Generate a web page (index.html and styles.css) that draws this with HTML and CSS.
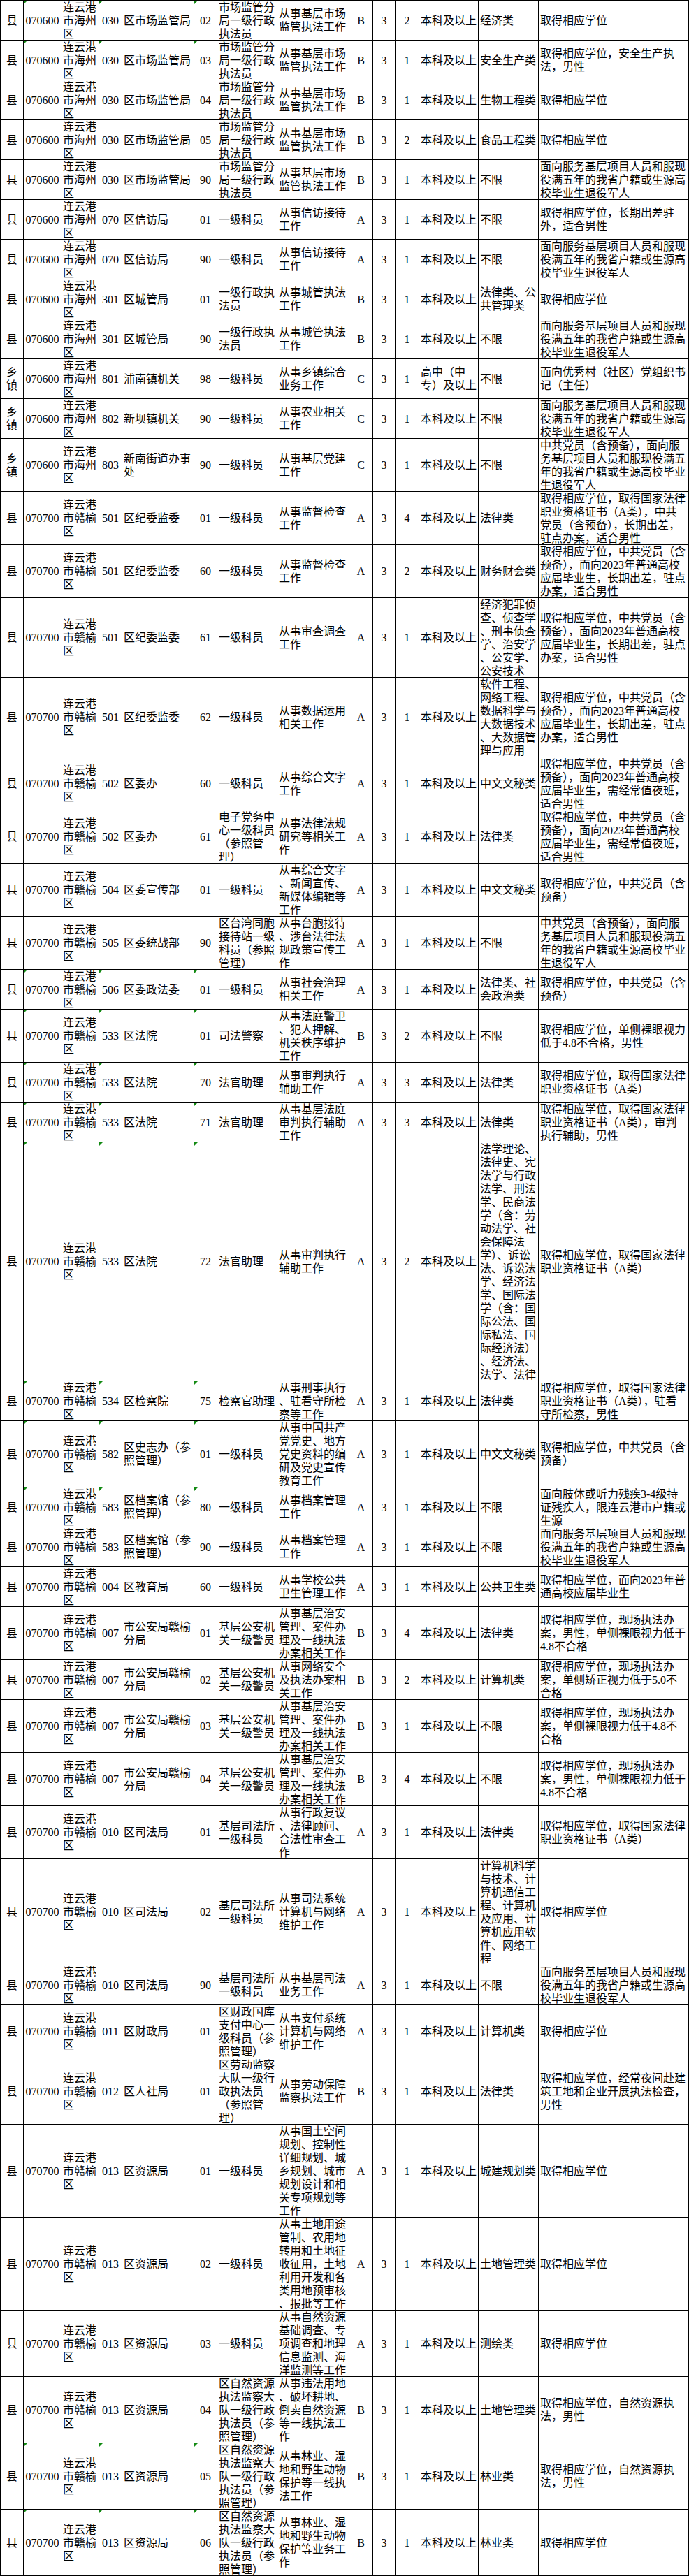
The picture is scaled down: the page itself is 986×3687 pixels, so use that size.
FILE: index.html
```html
<!DOCTYPE html>
<html lang="zh-CN">
<head>
<meta charset="utf-8">
<title>职位表</title>
<link rel="stylesheet" href="styles.css">
</head>
<body>
<div class="sheet">
<div class="row tri"><div>县</div><div>070600</div><div>连云港市海州区</div><div>030</div><div>区市场监管局</div><div>02</div><div>市场监管分局一级行政执法员</div><div>从事基层市场<br>监管执法工作</div><div>B</div><div>3</div><div>2</div><div>本科及以上</div><div>经济类</div><div>取得相应学位</div></div>
<div class="row tri"><div>县</div><div>070600</div><div>连云港市海州区</div><div>030</div><div>区市场监管局</div><div>03</div><div>市场监管分局一级行政执法员</div><div>从事基层市场<br>监管执法工作</div><div>B</div><div>3</div><div>1</div><div>本科及以上</div><div>安全生产类</div><div>取得相应学位，安全生产执<br>法，男性</div></div>
<div class="row"><div>县</div><div>070600</div><div>连云港市海州区</div><div>030</div><div>区市场监管局</div><div>04</div><div>市场监管分局一级行政执法员</div><div>从事基层市场<br>监管执法工作</div><div>B</div><div>3</div><div>1</div><div>本科及以上</div><div>生物工程类</div><div>取得相应学位</div></div>
<div class="row"><div>县</div><div>070600</div><div>连云港市海州区</div><div>030</div><div>区市场监管局</div><div>05</div><div>市场监管分局一级行政执法员</div><div>从事基层市场<br>监管执法工作</div><div>B</div><div>3</div><div>2</div><div>本科及以上</div><div>食品工程类</div><div>取得相应学位</div></div>
<div class="row"><div>县</div><div>070600</div><div>连云港市海州区</div><div>030</div><div>区市场监管局</div><div>90</div><div>市场监管分局一级行政执法员</div><div>从事基层市场<br>监管执法工作</div><div>B</div><div>3</div><div>1</div><div>本科及以上</div><div>不限</div><div>面向服务基层项目人员和服现<br>役满五年的我省户籍或生源高<br>校毕业生退役军人</div></div>
<div class="row"><div>县</div><div>070600</div><div>连云港市海州区</div><div>070</div><div>区信访局</div><div>01</div><div>一级科员</div><div>从事信访接待<br>工作</div><div>A</div><div>3</div><div>1</div><div>本科及以上</div><div>不限</div><div>取得相应学位，长期出差驻<br>外，适合男性</div></div>
<div class="row"><div>县</div><div>070600</div><div>连云港市海州区</div><div>070</div><div>区信访局</div><div>90</div><div>一级科员</div><div>从事信访接待<br>工作</div><div>A</div><div>3</div><div>1</div><div>本科及以上</div><div>不限</div><div>面向服务基层项目人员和服现<br>役满五年的我省户籍或生源高<br>校毕业生退役军人</div></div>
<div class="row"><div>县</div><div>070600</div><div>连云港市海州区</div><div>301</div><div>区城管局</div><div>01</div><div>一级行政执法员</div><div>从事城管执法<br>工作</div><div>B</div><div>3</div><div>1</div><div>本科及以上</div><div>法律类、公<br>共管理类</div><div>取得相应学位</div></div>
<div class="row"><div>县</div><div>070600</div><div>连云港市海州区</div><div>301</div><div>区城管局</div><div>90</div><div>一级行政执法员</div><div>从事城管执法<br>工作</div><div>B</div><div>3</div><div>1</div><div>本科及以上</div><div>不限</div><div>面向服务基层项目人员和服现<br>役满五年的我省户籍或生源高<br>校毕业生退役军人</div></div>
<div class="row"><div>乡<br>镇</div><div>070600</div><div>连云港市海州区</div><div>801</div><div>浦南镇机关</div><div>98</div><div>一级科员</div><div>从事乡镇综合<br>业务工作</div><div>C</div><div>3</div><div>1</div><div>高中（中<br>专）及以上</div><div>不限</div><div>面向优秀村（社区）党组织书<br>记（主任）</div></div>
<div class="row"><div>乡<br>镇</div><div>070600</div><div>连云港市海州区</div><div>802</div><div>新坝镇机关</div><div>90</div><div>一级科员</div><div>从事农业相关<br>工作</div><div>C</div><div>3</div><div>1</div><div>本科及以上</div><div>不限</div><div>面向服务基层项目人员和服现<br>役满五年的我省户籍或生源高<br>校毕业生退役军人</div></div>
<div class="row r4"><div>乡<br>镇</div><div>070600</div><div>连云港市海州区</div><div>803</div><div>新南街道办事处</div><div>90</div><div>一级科员</div><div>从事基层党建<br>工作</div><div>C</div><div>3</div><div>1</div><div>本科及以上</div><div>不限</div><div>中共党员（含预备），面向服<br>务基层项目人员和服现役满五<br>年的我省户籍或生源高校毕业<br>生退役军人</div></div>
<div class="row r4"><div>县</div><div>070700</div><div>连云港市赣榆区</div><div>501</div><div>区纪委监委</div><div>01</div><div>一级科员</div><div>从事监督检查<br>工作</div><div>A</div><div>3</div><div>4</div><div>本科及以上</div><div>法律类</div><div>取得相应学位，取得国家法律<br>职业资格证书（A类），中共<br>党员（含预备），长期出差，<br>驻点办案，适合男性</div></div>
<div class="row r4"><div>县</div><div>070700</div><div>连云港市赣榆区</div><div>501</div><div>区纪委监委</div><div>60</div><div>一级科员</div><div>从事监督检查<br>工作</div><div>A</div><div>3</div><div>2</div><div>本科及以上</div><div>财务财会类</div><div>取得相应学位，中共党员（含<br>预备），面向2023年普通高校<br>应届毕业生，长期出差，驻点<br>办案，适合男性</div></div>
<div class="row r6"><div>县</div><div>070700</div><div>连云港市赣榆区</div><div>501</div><div>区纪委监委</div><div>61</div><div>一级科员</div><div>从事审查调查<br>工作</div><div>A</div><div>3</div><div>1</div><div>本科及以上</div><div>经济犯罪侦<br>查、侦查学<br>、刑事侦查<br>学、治安学<br>、公安学、<br>公安技术</div><div>取得相应学位，中共党员（含<br>预备），面向2023年普通高校<br>应届毕业生，长期出差，驻点<br>办案，适合男性</div></div>
<div class="row r6"><div>县</div><div>070700</div><div>连云港市赣榆区</div><div>501</div><div>区纪委监委</div><div>62</div><div>一级科员</div><div>从事数据运用<br>相关工作</div><div>A</div><div>3</div><div>1</div><div>本科及以上</div><div>软件工程、<br>网络工程、<br>数据科学与<br>大数据技术<br>、大数据管<br>理与应用</div><div>取得相应学位，中共党员（含<br>预备），面向2023年普通高校<br>应届毕业生，长期出差，驻点<br>办案，适合男性</div></div>
<div class="row r4"><div>县</div><div>070700</div><div>连云港市赣榆区</div><div>502</div><div>区委办</div><div>60</div><div>一级科员</div><div>从事综合文字<br>工作</div><div>A</div><div>3</div><div>1</div><div>本科及以上</div><div>中文文秘类</div><div>取得相应学位，中共党员（含<br>预备），面向2023年普通高校<br>应届毕业生，需经常值夜班，<br>适合男性</div></div>
<div class="row r4"><div>县</div><div>070700</div><div>连云港市赣榆区</div><div>502</div><div>区委办</div><div>61</div><div>电子党务中心一级科员（参照管理）</div><div>从事法律法规<br>研究等相关工<br>作</div><div>A</div><div>3</div><div>1</div><div>本科及以上</div><div>法律类</div><div>取得相应学位，中共党员（含<br>预备），面向2023年普通高校<br>应届毕业生，需经常值夜班，<br>适合男性</div></div>
<div class="row r4"><div>县</div><div>070700</div><div>连云港市赣榆区</div><div>504</div><div>区委宣传部</div><div>01</div><div>一级科员</div><div>从事综合文字<br>、新闻宣传、<br>新媒体编辑等<br>工作</div><div>A</div><div>3</div><div>1</div><div>本科及以上</div><div>中文文秘类</div><div>取得相应学位，中共党员（含<br>预备）</div></div>
<div class="row r4"><div>县</div><div>070700</div><div>连云港市赣榆区</div><div>505</div><div>区委统战部</div><div>90</div><div>区台湾同胞接待站一级科员（参照管理）</div><div>从事台胞接待<br>、涉台法律法<br>规政策宣传工<br>作</div><div>A</div><div>3</div><div>1</div><div>本科及以上</div><div>不限</div><div>中共党员（含预备），面向服<br>务基层项目人员和服现役满五<br>年的我省户籍或生源高校毕业<br>生退役军人</div></div>
<div class="row tri"><div>县</div><div>070700</div><div>连云港市赣榆区</div><div>506</div><div>区委政法委</div><div>01</div><div>一级科员</div><div>从事社会治理<br>相关工作</div><div>A</div><div>3</div><div>1</div><div>本科及以上</div><div>法律类、社<br>会政治类</div><div>取得相应学位，中共党员（含<br>预备）</div></div>
<div class="row r4 tri"><div>县</div><div>070700</div><div>连云港市赣榆区</div><div>533</div><div>区法院</div><div>01</div><div>司法警察</div><div>从事法庭警卫<br>、犯人押解、<br>机关秩序维护<br>工作</div><div>B</div><div>3</div><div>2</div><div>本科及以上</div><div>不限</div><div>取得相应学位，单侧裸眼视力<br>低于4.8不合格，男性</div></div>
<div class="row tri"><div>县</div><div>070700</div><div>连云港市赣榆区</div><div>533</div><div>区法院</div><div>70</div><div>法官助理</div><div>从事审判执行<br>辅助工作</div><div>A</div><div>3</div><div>3</div><div>本科及以上</div><div>法律类</div><div>取得相应学位，取得国家法律<br>职业资格证书（A类）</div></div>
<div class="row tri"><div>县</div><div>070700</div><div>连云港市赣榆区</div><div>533</div><div>区法院</div><div>71</div><div>法官助理</div><div>从事基层法庭<br>审判执行辅助<br>工作</div><div>A</div><div>3</div><div>3</div><div>本科及以上</div><div>法律类</div><div>取得相应学位，取得国家法律<br>职业资格证书（A类），审判<br>执行辅助，男性</div></div>
<div class="row r18 tri"><div>县</div><div>070700</div><div>连云港市赣榆区</div><div>533</div><div>区法院</div><div>72</div><div>法官助理</div><div>从事审判执行<br>辅助工作</div><div>A</div><div>3</div><div>2</div><div>本科及以上</div><div>法学理论、<br>法律史、宪<br>法学与行政<br>法学、刑法<br>学、民商法<br>学（含：劳<br>动法学、社<br>会保障法<br>学）、诉讼<br>法、诉讼法<br>学、经济法<br>学、国际法<br>学（含：国<br>际公法、国<br>际私法、国<br>际经济法）<br>、经济法、<br>法学、法律</div><div>取得相应学位，取得国家法律<br>职业资格证书（A类）</div></div>
<div class="row tri"><div>县</div><div>070700</div><div>连云港市赣榆区</div><div>534</div><div>区检察院</div><div>75</div><div>检察官助理</div><div>从事刑事执行<br>、驻看守所检<br>察等工作</div><div>A</div><div>3</div><div>1</div><div>本科及以上</div><div>法律类</div><div>取得相应学位，取得国家法律<br>职业资格证书（A类），驻看<br>守所检察，男性</div></div>
<div class="row r5 tri"><div>县</div><div>070700</div><div>连云港市赣榆区</div><div>582</div><div>区史志办（参照管理）</div><div>01</div><div>一级科员</div><div>从事中国共产<br>党党史、地方<br>党史资料的编<br>研及党史宣传<br>教育工作</div><div>A</div><div>3</div><div>1</div><div>本科及以上</div><div>中文文秘类</div><div>取得相应学位，中共党员（含<br>预备）</div></div>
<div class="row tri"><div>县</div><div>070700</div><div>连云港市赣榆区</div><div>583</div><div>区档案馆（参照管理）</div><div>80</div><div>一级科员</div><div>从事档案管理<br>工作</div><div>A</div><div>3</div><div>1</div><div>本科及以上</div><div>不限</div><div>面向肢体或听力残疾3-4级持<br>证残疾人，限连云港市户籍或<br>生源</div></div>
<div class="row"><div>县</div><div>070700</div><div>连云港市赣榆区</div><div>583</div><div>区档案馆（参照管理）</div><div>90</div><div>一级科员</div><div>从事档案管理<br>工作</div><div>A</div><div>3</div><div>1</div><div>本科及以上</div><div>不限</div><div>面向服务基层项目人员和服现<br>役满五年的我省户籍或生源高<br>校毕业生退役军人</div></div>
<div class="row"><div>县</div><div>070700</div><div>连云港市赣榆区</div><div>004</div><div>区教育局</div><div>60</div><div>一级科员</div><div>从事学校公共<br>卫生管理工作</div><div>A</div><div>3</div><div>1</div><div>本科及以上</div><div>公共卫生类</div><div>取得相应学位，面向2023年普<br>通高校应届毕业生</div></div>
<div class="row r4"><div>县</div><div>070700</div><div>连云港市赣榆区</div><div>007</div><div>市公安局赣榆分局</div><div>01</div><div>基层公安机关一级警员</div><div>从事基层治安<br>管理、案件办<br>理及一线执法<br>办案相关工作</div><div>B</div><div>3</div><div>4</div><div>本科及以上</div><div>法律类</div><div>取得相应学位，现场执法办<br>案，男性，单侧裸眼视力低于<br>4.8不合格</div></div>
<div class="row"><div>县</div><div>070700</div><div>连云港市赣榆区</div><div>007</div><div>市公安局赣榆分局</div><div>02</div><div>基层公安机关一级警员</div><div>从事网络安全<br>及执法办案相<br>关工作</div><div>B</div><div>3</div><div>2</div><div>本科及以上</div><div>计算机类</div><div>取得相应学位，现场执法办<br>案，单侧矫正视力低于5.0不<br>合格</div></div>
<div class="row r4"><div>县</div><div>070700</div><div>连云港市赣榆区</div><div>007</div><div>市公安局赣榆分局</div><div>03</div><div>基层公安机关一级警员</div><div>从事基层治安<br>管理、案件办<br>理及一线执法<br>办案相关工作</div><div>B</div><div>3</div><div>1</div><div>本科及以上</div><div>不限</div><div>取得相应学位，现场执法办<br>案，单侧裸眼视力低于4.8不<br>合格</div></div>
<div class="row r4"><div>县</div><div>070700</div><div>连云港市赣榆区</div><div>007</div><div>市公安局赣榆分局</div><div>04</div><div>基层公安机关一级警员</div><div>从事基层治安<br>管理、案件办<br>理及一线执法<br>办案相关工作</div><div>B</div><div>3</div><div>4</div><div>本科及以上</div><div>不限</div><div>取得相应学位，现场执法办<br>案，男性，单侧裸眼视力低于<br>4.8不合格</div></div>
<div class="row r4"><div>县</div><div>070700</div><div>连云港市赣榆区</div><div>010</div><div>区司法局</div><div>01</div><div>基层司法所一级科员</div><div>从事行政复议<br>、法律顾问、<br>合法性审查工<br>作</div><div>A</div><div>3</div><div>1</div><div>本科及以上</div><div>法律类</div><div>取得相应学位，取得国家法律<br>职业资格证书（A类）</div></div>
<div class="row r8"><div>县</div><div>070700</div><div>连云港市赣榆区</div><div>010</div><div>区司法局</div><div>02</div><div>基层司法所一级科员</div><div>从事司法系统<br>计算机与网络<br>维护工作</div><div>A</div><div>3</div><div>1</div><div>本科及以上</div><div>计算机科学<br>与技术、计<br>算机通信工<br>程、计算机<br>及应用、计<br>算机应用软<br>件、网络工<br>程</div><div>取得相应学位</div></div>
<div class="row"><div>县</div><div>070700</div><div>连云港市赣榆区</div><div>010</div><div>区司法局</div><div>90</div><div>基层司法所一级科员</div><div>从事基层司法<br>业务工作</div><div>A</div><div>3</div><div>1</div><div>本科及以上</div><div>不限</div><div>面向服务基层项目人员和服现<br>役满五年的我省户籍或生源高<br>校毕业生退役军人</div></div>
<div class="row r4"><div>县</div><div>070700</div><div>连云港市赣榆区</div><div>011</div><div>区财政局</div><div>01</div><div>区财政国库支付中心一级科员（参照管理）</div><div>从事支付系统<br>计算机与网络<br>维护工作</div><div>A</div><div>3</div><div>1</div><div>本科及以上</div><div>计算机类</div><div>取得相应学位</div></div>
<div class="row r5"><div>县</div><div>070700</div><div>连云港市赣榆区</div><div>012</div><div>区人社局</div><div>01</div><div>区劳动监察大队一级行政执法员（参照管理）</div><div>从事劳动保障<br>监察执法工作</div><div>B</div><div>3</div><div>1</div><div>本科及以上</div><div>法律类</div><div>取得相应学位，经常夜间赴建<br>筑工地和企业开展执法检查，<br>男性</div></div>
<div class="row r7"><div>县</div><div>070700</div><div>连云港市赣榆区</div><div>013</div><div>区资源局</div><div>01</div><div>一级科员</div><div>从事国土空间<br>规划、控制性<br>详细规划、城<br>乡规划、城市<br>规划设计和相<br>关专项规划等<br>工作</div><div>A</div><div>3</div><div>1</div><div>本科及以上</div><div>城建规划类</div><div>取得相应学位</div></div>
<div class="row r7"><div>县</div><div>070700</div><div>连云港市赣榆区</div><div>013</div><div>区资源局</div><div>02</div><div>一级科员</div><div>从事土地用途<br>管制、农用地<br>转用和土地征<br>收征用，土地<br>利用开发和各<br>类用地预审核<br>、报批等工作</div><div>A</div><div>3</div><div>1</div><div>本科及以上</div><div>土地管理类</div><div>取得相应学位</div></div>
<div class="row r5"><div>县</div><div>070700</div><div>连云港市赣榆区</div><div>013</div><div>区资源局</div><div>03</div><div>一级科员</div><div>从事自然资源<br>基础调查、专<br>项调查和地理<br>信息监测、海<br>洋监测等工作</div><div>A</div><div>3</div><div>1</div><div>本科及以上</div><div>测绘类</div><div>取得相应学位</div></div>
<div class="row r5"><div>县</div><div>070700</div><div>连云港市赣榆区</div><div>013</div><div>区资源局</div><div>04</div><div>区自然资源执法监察大队一级行政执法员（参照管理）</div><div>从事违法用地<br>、破坏耕地、<br>倒卖自然资源<br>等一线执法工<br>作</div><div>B</div><div>3</div><div>1</div><div>本科及以上</div><div>土地管理类</div><div>取得相应学位，自然资源执<br>法，男性</div></div>
<div class="row r5 tri"><div>县</div><div>070700</div><div>连云港市赣榆区</div><div>013</div><div>区资源局</div><div>05</div><div>区自然资源执法监察大队一级行政执法员（参照管理）</div><div>从事林业、湿<br>地和野生动物<br>保护等一线执<br>法工作</div><div>B</div><div>3</div><div>1</div><div>本科及以上</div><div>林业类</div><div>取得相应学位，自然资源执<br>法，男性</div></div>
<div class="row r5 tri"><div>县</div><div>070700</div><div>连云港市赣榆区</div><div>013</div><div>区资源局</div><div>06</div><div>区自然资源执法监察大队一级行政执法员（参照管理）</div><div>从事林业、湿<br>地和野生动物<br>保护等业务工<br>作</div><div>B</div><div>3</div><div>1</div><div>本科及以上</div><div>林业类</div><div>取得相应学位</div></div>
</div>
</body>
</html>
```
FILE: styles.css
```css
html, body {
  margin: 0;
  padding: 0;
  background: #ffffff;
}

body {
  color: #000000;
  font-family: "Liberation Serif", "Noto Sans CJK SC", serif;
  font-size: 16px;
  line-height: 19px;
}

.sheet {
  width: 986px;
  box-sizing: border-box;
  border-top: 1px solid #000000;
  border-left: 1px solid #000000;
}

.row {
  display: grid;
  grid-template-columns: 33px 54px 54px 33px 103px 33px 86px 103px 34px 32px 34px 85px 86px 215px;
  height: 57px;
}

.r4 { height: 76px; }
.r5 { height: 95px; }
.r6 { height: 114px; }
.r7 { height: 133px; }
.r8 { height: 152px; }
.r18 { height: 342px; }

.row > div {
  position: relative;
  box-sizing: border-box;
  min-width: 0;
  border-right: 1px solid #000000;
  border-bottom: 1px solid #000000;
  padding: 0 2px;
  display: flex;
  align-items: safe center;
  justify-content: flex-start;
  text-align: left;
  overflow: hidden;
}

.row > div:nth-child(1),
.row > div:nth-child(2),
.row > div:nth-child(4),
.row > div:nth-child(6),
.row > div:nth-child(9),
.row > div:nth-child(10),
.row > div:nth-child(11) {
  justify-content: center;
  text-align: center;
  padding: 0 1px;
}

.tri > div:nth-child(2)::before,
.tri > div:nth-child(4)::before,
.tri > div:nth-child(6)::before {
  content: "";
  position: absolute;
  top: 0;
  left: 0;
  width: 0;
  height: 0;
  border-top: 5px solid #138a13;
  border-right: 5px solid transparent;
}
```
